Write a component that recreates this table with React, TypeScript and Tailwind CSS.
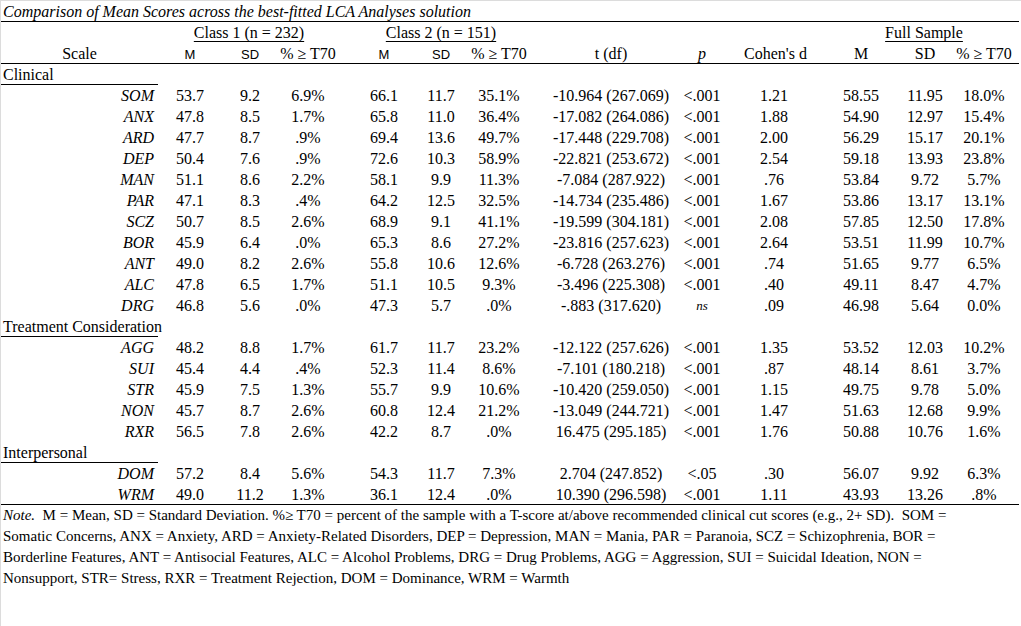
import React from 'react';

type Row = [string, ...string[]];

const COLS = [
  'ml-[8px] w-[48px]',
  'ml-[12px] w-[48px]',
  'ml-[4px] w-[60px]',
  'ml-[22px] w-[48px]',
  'ml-[9px] w-[48px]',
  'ml-[4px] w-[60px]',
  'ml-[12px] w-[140px]',
  'ml-[1px] w-[40px]',
  'ml-[22px] w-[60px]',
  'ml-[29px] w-[56px]',
  'ml-[8px] w-[56px]',
  'ml-[3px] w-[56px]',
];

const sections: { label: string; rows: Row[] }[] = [
  {
    label: 'Clinical',
    rows: [
      ['SOM', '53.7', '9.2', '6.9%', '66.1', '11.7', '35.1%', '-10.964 (267.069)', '<.001', '1.21', '58.55', '11.95', '18.0%'],
      ['ANX', '47.8', '8.5', '1.7%', '65.8', '11.0', '36.4%', '-17.082 (264.086)', '<.001', '1.88', '54.90', '12.97', '15.4%'],
      ['ARD', '47.7', '8.7', '.9%', '69.4', '13.6', '49.7%', '-17.448 (229.708)', '<.001', '2.00', '56.29', '15.17', '20.1%'],
      ['DEP', '50.4', '7.6', '.9%', '72.6', '10.3', '58.9%', '-22.821 (253.672)', '<.001', '2.54', '59.18', '13.93', '23.8%'],
      ['MAN', '51.1', '8.6', '2.2%', '58.1', '9.9', '11.3%', '-7.084 (287.922)', '<.001', '.76', '53.84', '9.72', '5.7%'],
      ['PAR', '47.1', '8.3', '.4%', '64.2', '12.5', '32.5%', '-14.734 (235.486)', '<.001', '1.67', '53.86', '13.17', '13.1%'],
      ['SCZ', '50.7', '8.5', '2.6%', '68.9', '9.1', '41.1%', '-19.599 (304.181)', '<.001', '2.08', '57.85', '12.50', '17.8%'],
      ['BOR', '45.9', '6.4', '.0%', '65.3', '8.6', '27.2%', '-23.816 (257.623)', '<.001', '2.64', '53.51', '11.99', '10.7%'],
      ['ANT', '49.0', '8.2', '2.6%', '55.8', '10.6', '12.6%', '-6.728 (263.276)', '<.001', '.74', '51.65', '9.77', '6.5%'],
      ['ALC', '47.8', '6.5', '1.7%', '51.1', '10.5', '9.3%', '-3.496 (225.308)', '<.001', '.40', '49.11', '8.47', '4.7%'],
      ['DRG', '46.8', '5.6', '.0%', '47.3', '5.7', '.0%', '-.883 (317.620)', 'ns', '.09', '46.98', '5.64', '0.0%'],
    ],
  },
  {
    label: 'Treatment Consideration',
    rows: [
      ['AGG', '48.2', '8.8', '1.7%', '61.7', '11.7', '23.2%', '-12.122 (257.626)', '<.001', '1.35', '53.52', '12.03', '10.2%'],
      ['SUI', '45.4', '4.4', '.4%', '52.3', '11.4', '8.6%', '-7.101 (180.218)', '<.001', '.87', '48.14', '8.61', '3.7%'],
      ['STR', '45.9', '7.5', '1.3%', '55.7', '9.9', '10.6%', '-10.420 (259.050)', '<.001', '1.15', '49.75', '9.78', '5.0%'],
      ['NON', '45.7', '8.7', '2.6%', '60.8', '12.4', '21.2%', '-13.049 (244.721)', '<.001', '1.47', '51.63', '12.68', '9.9%'],
      ['RXR', '56.5', '7.8', '2.6%', '42.2', '8.7', '.0%', '16.475 (295.185)', '<.001', '1.76', '50.88', '10.76', '1.6%'],
    ],
  },
  {
    label: 'Interpersonal',
    rows: [
      ['DOM', '57.2', '8.4', '5.6%', '54.3', '11.7', '7.3%', '2.704 (247.852)', '<.05', '.30', '56.07', '9.92', '6.3%'],
      ['WRM', '49.0', '11.2', '1.3%', '36.1', '12.4', '.0%', '10.390 (296.598)', '<.001', '1.11', '43.93', '13.26', '.8%'],
    ],
  },
];

const sans = "font-['Liberation_Sans',sans-serif] text-[13px]";

const headers: React.ReactNode[] = [
  <span className={sans}>M</span>,
  <span className={sans}>SD</span>,
  '% ≥ T70',
  <span className={sans}>M</span>,
  <span className={sans}>SD</span>,
  '% ≥ T70',
  't (df)',
  <span className="italic">p</span>,
  "Cohen's d",
  'M',
  'SD',
  '% ≥ T70',
];

export default function App() {
  return (
    <div className="w-[1021px] h-[626px] bg-white border-t border-l border-[#dcdcdc] text-black text-[16px] leading-[21px] font-['Liberation_Serif',serif] overflow-hidden">
      <div className="w-[1018px]">
        <div className="h-[21px] border-b border-black pl-[2px] italic whitespace-nowrap">
          Comparison of Mean Scores across the best-fitted LCA Analyses solution
        </div>

        <div className="h-[21px] flex whitespace-nowrap">
          <div className="w-[157px]" />
          <div className="ml-[18px] w-[146px] text-center">
            <span className="underline underline-offset-[3px]">Class 1 (n = 232)</span>
          </div>
          <div className="ml-[46px] w-[146px] text-center">
            <span className="underline underline-offset-[3px]">Class 2 (n = 151)</span>
          </div>
          <div className="ml-[336px] w-[148px] text-center">
            <span className="underline underline-offset-[3px]">Full Sample</span>
          </div>
        </div>

        <div className="h-[21px] flex border-b border-black whitespace-nowrap">
          <div className="w-[157px] text-center">Scale</div>
          {headers.map((h, i) => (
            <div key={i} className={`${COLS[i]} text-center`}>
              {h}
            </div>
          ))}
        </div>

        {sections.map((s, si) => (
          <div key={s.label}>
            <div className="h-[21px] flex">
              <div className="w-[157px] border-b border-black pl-[2px] whitespace-nowrap">{s.label}</div>
            </div>
            {s.rows.map((r, ri) => {
              const last = si === sections.length - 1 && ri === s.rows.length - 1;
              return (
                <div key={r[0]} className={last ? 'h-[21px] flex whitespace-nowrap border-b border-black' : 'h-[21px] flex whitespace-nowrap'}>
                  <div className="w-[157px] text-right pr-[4px] italic">{r[0]}</div>
                  {r.slice(1).map((v, i) => (
                    <div key={i} className={`${COLS[i]} text-center ${i === 7 && v === 'ns' ? 'italic text-[13px]' : ''}`}>
                      {v}
                    </div>
                  ))}
                </div>
              );
            })}
          </div>
        ))}

        <div className="pl-[2px] whitespace-nowrap text-[15px]">
          <div>
            <span className="italic">Note.</span>&nbsp; M = Mean, SD = Standard Deviation. %≥ T70 = percent of the sample with a T-score at/above recommended clinical cut scores (e.g., 2+ SD).&nbsp; SOM =
          </div>
          <div>
            Somatic Concerns, ANX = Anxiety, ARD = Anxiety-Related Disorders, DEP = Depression, MAN = Mania, PAR = Paranoia, SCZ = Schizophrenia, BOR =
          </div>
          <div>
            Borderline Features, ANT = Antisocial Features, ALC = Alcohol Problems, DRG = Drug Problems, AGG = Aggression, SUI = Suicidal Ideation, NON =
          </div>
          <div>Nonsupport, STR= Stress, RXR = Treatment Rejection, DOM = Dominance, WRM = Warmth</div>
        </div>
      </div>
    </div>
  );
}
